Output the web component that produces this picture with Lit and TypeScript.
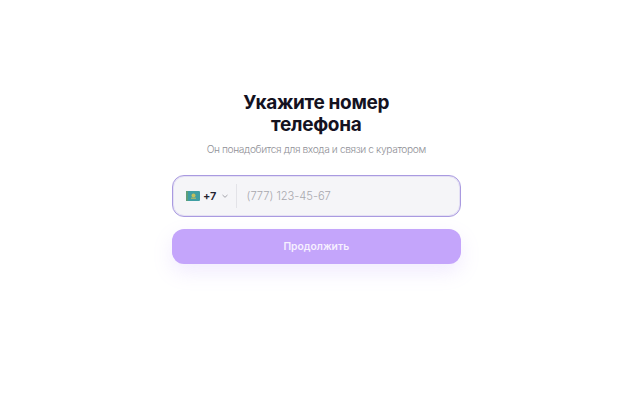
import { LitElement, html, css } from "lit";
import { customElement } from "lit/decorators.js";

@customElement("app-root")
export class AppRoot extends LitElement {
  static styles = css`
    :host {
      display: block;
      width: 640px;
      height: 402px;
      background: #fff;
      font-family: Inter, "Noto Sans", sans-serif;
      overflow: hidden;
    }
    .col {
      width: 289.5px;
      margin-left: 171.5px;
      padding-top: 92px;
      display: flex;
      flex-direction: column;
      align-items: stretch;
    }
    h1 {
      margin: 0 auto;
      width: 170px;
      text-align: center;
      font-size: 19px;
      line-height: 22px;
      font-weight: 700;
      letter-spacing: -0.32px;
      color: #14121f;
    }
    .sub {
      margin: 6px 0 0;
      text-align: center;
      font-size: 10.2px;
      line-height: 15px;
      font-weight: 300;
      letter-spacing: -0.38px;
      color: #8f8f96;
      white-space: nowrap;
    }
    .phone {
      margin-top: 18px;
      height: 41.5px;
      box-sizing: border-box;
      border: 1px solid #a99ae0;
      box-shadow: inset 0 0 0 1px rgba(190, 175, 235, 0.3);
      border-radius: 12px;
      background: #f5f5f8;
      display: flex;
      align-items: center;
      padding-left: 13px;
    }
    .flag { width: 14px; height: 10px; flex: none; display: block; }
    .code {
      margin-left: 3.5px;
      font-size: 11px;
      font-weight: 600;
      letter-spacing: -0.2px;
      color: #23212e;
    }
    .chev { margin-left: 5px; width: 8px; height: 8px; flex: none; }
    .sep {
      margin-left: 6.5px;
      width: 1px;
      height: 24px;
      background: #e3e3e8;
      flex: none;
    }
    .ph {
      margin-left: 10px;
      font-size: 11.2px;
      font-weight: 300;
      letter-spacing: -0.05px;
      color: #a8a8ae;
    }
    button {
      margin-top: 12.5px;
      height: 34.5px;
      border: 0;
      border-radius: 12px;
      background: #c4a5fb;
      color: #f6f0ff;
      font: 600 10.3px Inter, "Noto Sans", sans-serif;
      box-shadow: 0 8px 20px rgba(170, 130, 250, 0.16);
      padding: 0;
    }
  `;

  render() {
    return html`
      <div class="col">
        <h1>Укажите номер телефона</h1>
        <p class="sub">Он понадобится для входа и связи с куратором</p>
        <div class="phone">
          <svg class="flag" viewBox="0 0 14 10" aria-hidden="true">
            <rect width="14" height="10" rx="1" fill="#3f9ea3" />
            <rect x="0" width="2" height="10" fill="#5f9f7a" />
            <circle cx="7.5" cy="4.5" r="2" fill="#c2bf5e" />
            <path d="M5 7.2h5" stroke="#c2bf5e" stroke-width="1" />
          </svg>
          <span class="code">+7</span>
          <svg class="chev" viewBox="0 0 8 8" aria-hidden="true">
            <path d="M1.5 3l2.5 2.3L6.5 3" fill="none" stroke="#a5a5ac" stroke-width="1" />
          </svg>
          <span class="sep"></span>
          <span class="ph">(777) 123-45-67</span>
        </div>
        <button type="button">Продолжить</button>
      </div>
    `;
  }
}
